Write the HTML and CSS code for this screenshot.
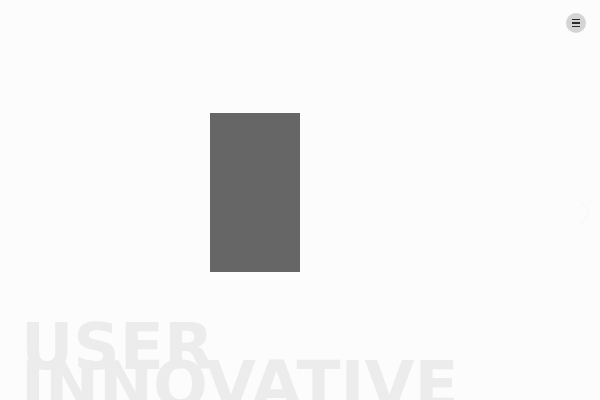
FILE: index.html
```html
<!DOCTYPE html>
<html>
<head>
<meta charset="utf-8">
<link rel="stylesheet" href="styles.css">
</head>
<body>
<div class="page">
  <button class="menu" aria-label="Menu">
    <span class="bar"></span><span class="bar"></span><span class="bar"></span>
  </button>
  <div class="next" aria-hidden="true">
    <svg width="10" height="26" viewBox="0 0 10 26"><path d="M1 1 L9 13 L1 25" fill="none" stroke="#f7f7f7" stroke-width="1"/></svg>
  </div>
  <main class="hero">
    <div class="photo"></div>
    <h1 class="title"><span>USER</span><span>INNOVATIVE</span></h1>
  </main>
</div>
</body>
</html>
```
FILE: styles.css
```css
html, body {
  margin: 0;
  padding: 0;
  background: #fcfcfc;
  overflow: hidden;
}
.page {
  position: relative;
  width: 600px;
  height: 400px;
  overflow: hidden;
  font-family: "DejaVu Sans", sans-serif;
}
.menu {
  position: absolute;
  top: 13px;
  right: 14px;
  width: 20px;
  height: 20px;
  border: none;
  border-radius: 50%;
  background: #d4d4d4;
  padding: 0;
  display: flex;
  flex-direction: column;
  align-items: center;
  justify-content: center;
  gap: 2px;
}
.bar {
  display: block;
  width: 8px;
  height: 1.5px;
  background: #2a2a2a;
}
.next {
  position: absolute;
  right: 10px;
  top: 200px;
}
.hero {
  padding-top: 113px;
  padding-left: 210px;
}
.photo {
  width: 90px;
  height: 159px;
  background: #666666;
}
.title {
  margin: 56px 0 0 -189px;
  font-size: 64.5px;
  font-weight: bold;
  line-height: 38px;
  color: #ececec;
  display: flex;
  flex-direction: column;
  white-space: nowrap;
}
```
